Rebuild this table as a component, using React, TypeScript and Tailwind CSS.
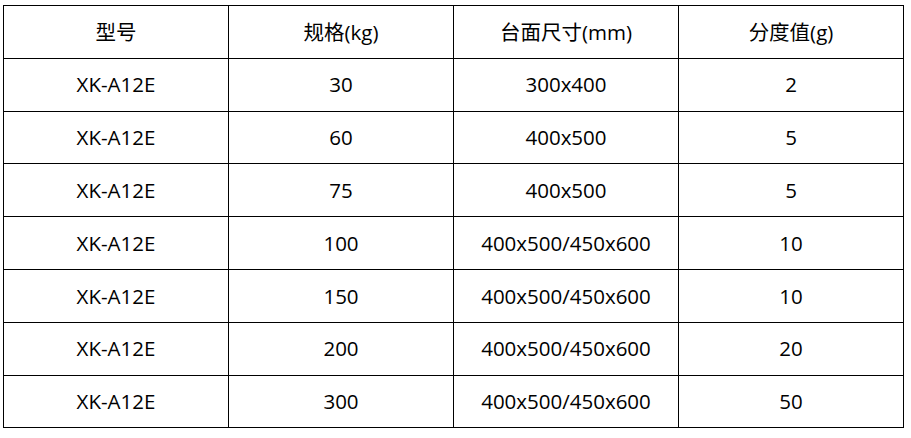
const rows = [
  ["XK-A12E", "30", "300x400", "2"],
  ["XK-A12E", "60", "400x500", "5"],
  ["XK-A12E", "75", "400x500", "5"],
  ["XK-A12E", "100", "400x500/450x600", "10"],
  ["XK-A12E", "150", "400x500/450x600", "10"],
  ["XK-A12E", "200", "400x500/450x600", "20"],
  ["XK-A12E", "300", "400x500/450x600", "50"],
];

const headers = ["型号", "规格(kg)", "台面尺寸(mm)", "分度值(g)"];

export default function App() {
  return (
    <div className="w-[911px] h-[438px] bg-white pt-[5px] pl-[3px]">
      <table
        className="border-collapse text-[20.5px] text-black text-center"
        style={{ fontFamily: '"Open Sans", "Noto Sans CJK SC", sans-serif' }}
      >
        <thead>
          <tr className="h-[52.8px]">
            {headers.map((h, i) => (
              <th key={i} className="border border-black font-normal w-[225px] p-0">
                {h}
              </th>
            ))}
          </tr>
        </thead>
        <tbody>
          {rows.map((r, i) => (
            <tr key={i} className="h-[52.8px]">
              {r.map((c, j) => (
                <td key={j} className="border border-black p-0">
                  {c}
                </td>
              ))}
            </tr>
          ))}
        </tbody>
      </table>
    </div>
  );
}
